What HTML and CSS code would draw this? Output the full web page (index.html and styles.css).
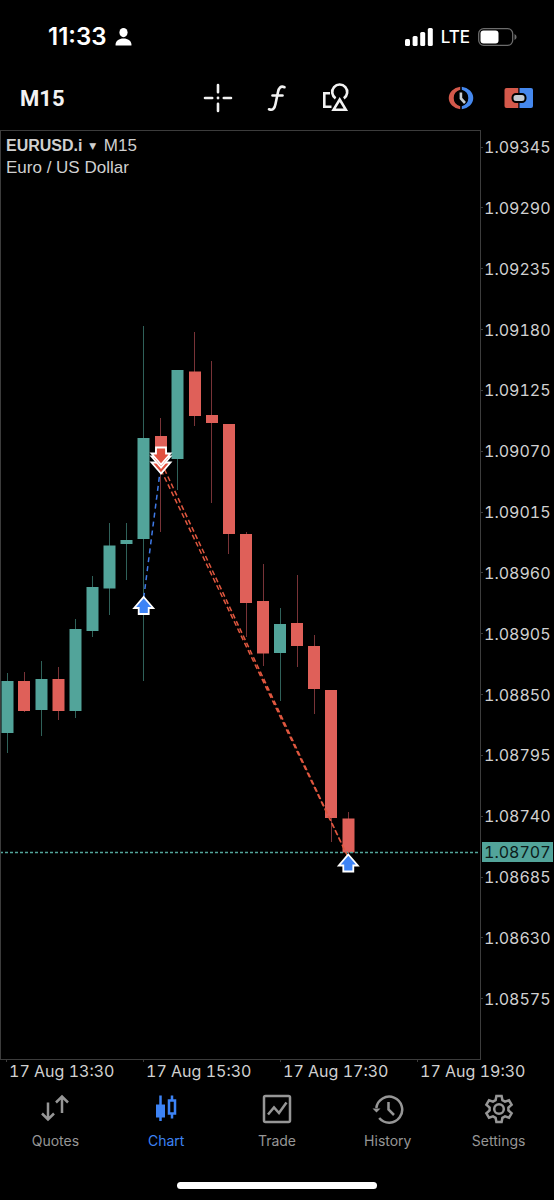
FILE: index.html
```html
<!DOCTYPE html>
<html lang="en">
<head>
    <meta charset="UTF-8">
    <meta name="viewport" content="width=device-width, initial-scale=1">
    <title>EURUSD.i M15</title>
    <link rel="stylesheet" href="styles.css">
</head>
<body>
    <header class="status-bar">
        <div class="status-group">
            <span class="clock">11:33</span>
            <svg width="17" height="18" viewBox="0 0 17 18" fill="#fff">
                <ellipse cx="8.5" cy="4.6" rx="4.1" ry="4.6"/>
                <path d="M.5 17C.5 13 4 10.6 8.500 10.600S16.500 13 16.500 17Q16.500 17.500 16 17.500H1Q.5 17.500.5 17Z"/>
            </svg>
        </div>
        <div class="status-group">
            <svg width="28" height="18" viewBox="0 0 28 18" fill="#fff">
                <rect x="0" y="11" width="5" height="7" rx="1.500"/>
                <rect x="7.600" y="8" width="5" height="10" rx="1.500"/>
                <rect x="15.200" y="4" width="5" height="14" rx="1.500"/>
                <rect x="22.800" y="0" width="5" height="18" rx="1.500"/>
            </svg>
            <span class="network">LTE</span>
            <svg width="39" height="18" viewBox="0 0 39 18">
                <rect x=".7" y=".7" width="34" height="16.600" rx="5" fill="none" stroke="#6c6c6c" stroke-width="1.300"/>
                <rect x="2.500" y="2.500" width="18" height="13" rx="3" fill="#fff"/>
                <path d="M36.500 6Q38.600 7 38.600 9T36.500 12Z" fill="#6c6c6c"/>
            </svg>
        </div>
    </header>

    <div class="toolbar">
        <button class="timeframe" type="button">M15</button>
        <div class="tools">
            <button type="button" aria-label="Crosshair">
                <svg width="30" height="30" viewBox="0 0 30 30" stroke="#f2f2f2" stroke-width="2.600" stroke-linecap="round">
                    <path d="M15 2V9.200M15 20.800V28M2 15H9.200M20.800 15H28"/>
                    <circle cx="15" cy="15" r="1.400" fill="#f2f2f2" stroke="none"/>
                </svg>
            </button>
            <button type="button" aria-label="Indicators">
                <svg width="30" height="30" viewBox="0 0 30 30" fill="none" stroke="#f2f2f2" stroke-width="2.600" stroke-linecap="round">
                    <path d="M22.500 4.200C18.500 2.500 16.800 5 16 9L13.500 21C12.600 26 10.500 27.800 7 26.300"/>
                    <path d="M10.500 12.500H20.500"/>
                </svg>
            </button>
            <button type="button" aria-label="Objects">
                <svg width="30" height="30" viewBox="0 0 30 30" fill="none" stroke="#f2f2f2" stroke-width="2.600">
                    <path d="M9 10.300H3.300V23.800H10.500"/>
                    <path d="M14.600 15.300A7.500 7.500 0 1 1 22.800 15.300"/>
                    <path d="M18.700 16.500L24.800 26.700H12.600Z"/>
                </svg>
            </button>
        </div>
        <div class="trade-tools">
            <button type="button" aria-label="Trading sessions">
                <svg width="30" height="24" viewBox="0 0 30 24">
                    <path d="M14.200 .8A13.200 11.300 0 0 0 14.200 23.200V20.200A8.800 8.500 0 0 1 14.200 3.800Z" fill="#d4594b"/>
                    <path d="M15.800 .8A13.200 11.300 0 0 1 15.800 23.200V20.200A8.800 8.500 0 0 0 15.800 3.800Z" fill="#4588ee"/>
                    <path d="M14.900 6.500V12.500L19 17" fill="none" stroke="#c6ccd2" stroke-width="2.600"/>
                </svg>
            </button>
            <button type="button" aria-label="One click trading">
                <svg width="30" height="24" viewBox="0 0 30 24">
                    <path d="M2.500 2H14.300V22H2.500Q.5 22 .5 20V4Q.5 2 2.500 2Z" fill="#d4594b"/>
                    <path d="M15.500 2H27Q29 2 29 4V20Q29 22 27 22H15.500Z" fill="#4588ee"/>
                    <rect x="8.500" y="8" width="13" height="8" rx="3.500" fill="#c3cbd3" stroke="#000" stroke-width="2"/>
                </svg>
            </button>
        </div>
    </div>

    <main>
        <div class="chart">
            <div class="plot">
                <div class="symbol">
                    <div><b>EURUSD.i</b> <span class="caret">▼</span> M15</div>
                    <div>Euro / US Dollar</div>
                </div>
                <svg class="candles" viewBox="1 131 479 928" role="img" aria-label="EURUSD candles">
                    <defs>
                        <path id="arrow" d="M0-9.500L9.500 1.500H5V7.500H-5V1.500H-9.500Z" stroke="#fff" stroke-width="1.800"/>
                    </defs>
                    <!-- wicks -->
                    <path class="wick-up" d="M7.500 673V753M41.500 661V736M75.500 619V718M92.500 576V637M109.500 523V615M126.500 523V580M143.500 326V681M177.500 370V490M280.500 608V701"/>
                    <path class="wick-down" d="M24.500 672V712M58.500 667V720M160.500 418V532M194.500 332V426M211.500 361V503M228.500 424V554M246.500 532V637M263.500 564V666M297.500 575V667M314.500 635V714M331.500 690V842M348.500 812V853"/>
                    <!-- bodies -->
                    <path class="body-up" d="M1.500 681h12v52h-12zM35.500 679h12v31h-12zM69.500 629h12v82h-12zM86.500 587h12v44h-12zM103.500 545.500h12v43h-12zM120.500 540h12v4h-12zM137.500 438h12v101h-12zM171.500 370h12v89h-12zM274 624h12v29h-12z"/>
                    <path class="body-down" d="M18 681h12v30h-12zM52.500 679h12v32h-12zM155 436h12v24h-12zM189 371.500h12v44.500h-12zM206 415h12v8h-12zM223 424h12v110h-12zM240 534h12v69h-12zM257 601h12v52.500h-12zM291 623h12v23h-12zM308 646h12v43h-12zM325 690h12v128h-12zM342.500 818.500h12v34h-12z"/>
                    <path class="price-line" d="M0 852.500H480"/>
                    <path class="deal-buy" d="M160.500 468L143.700 598"/>
                    <path class="deal-sell" d="M161 470L348 857M161 462L348 857"/>
                    <use href="#arrow" transform="translate(161 464) rotate(180)" fill="#e2503e"/>
                    <use href="#arrow" transform="translate(161 458) rotate(180)" fill="#e2503e"/>
                    <use href="#arrow" transform="translate(161 455) rotate(180)" fill="#e2503e"/>
                    <use href="#arrow" x="143.700" y="606.500" fill="#3d83f5"/>
                    <use href="#arrow" x="348.300" y="864" fill="#3d83f5"/>
                </svg>
            </div>
            <div class="price-axis">
                <span>1.09345</span>
                <span>1.09290</span>
                <span>1.09235</span>
                <span>1.09180</span>
                <span>1.09125</span>
                <span>1.09070</span>
                <span>1.09015</span>
                <span>1.08960</span>
                <span>1.08905</span>
                <span>1.08850</span>
                <span>1.08795</span>
                <span>1.08740</span>
                <span>1.08685</span>
                <span>1.08630</span>
                <span>1.08575</span>
                <div class="current-price">1.08707</div>
            </div>
        </div>
        <div class="time-axis">
            <span>17 Aug 13:30</span>
            <span>17 Aug 15:30</span>
            <span>17 Aug 17:30</span>
            <span>17 Aug 19:30</span>
        </div>
    </main>

    <nav class="tab-bar">
        <a href="#quotes">
            <svg width="32" height="32" viewBox="0 0 32 32">
                <path d="M9 8.500V25M3 19.500L9 25.500L15 19.500M23 19V3M17 8.500L23 2.500L29 8.500"/>
            </svg>
            Quotes
        </a>
        <a href="#chart" class="active">
            <svg width="32" height="32" viewBox="0 0 32 32">
                <path d="M10.500 1.500V27M22 1.500V6M22 20V24.500"/>
                <path d="M6 10.500H15V23.500H6Z" fill="currentColor" stroke="none"/>
                <path d="M19 6.500H25V19.500H19Z"/>
            </svg>
            Chart
        </a>
        <a href="#trade">
            <svg width="32" height="32" viewBox="0 0 32 32">
                <rect x="3" y="2" width="26" height="26" rx="1.500"/>
                <path d="M7 20.500L13 13.500L18 19L25.500 8.500"/>
            </svg>
            Trade
        </a>
        <a href="#history">
            <svg width="32" height="32" viewBox="0 0 32 32">
                <path d="M7.200 24A13 13 0 1 0 4.300 14"/>
                <path d="M.5 14.500H8.500L4.500 18.500Z" fill="currentColor" stroke="none"/>
                <path d="M16.500 8V15.500L22 21"/>
            </svg>
            History
        </a>
        <a href="#settings">
            <svg width="32" height="32" viewBox="0 0 32 32">
                <path d="M13.400 2H18.600L19.400 6.200L22 7.700L26 6.300L28.600 10.700L25.400 13.500V16.500L28.600 19.300L26 23.700L22 22.300L19.400 23.800L18.600 28H13.400L12.600 23.800L10 22.300L6 23.700L3.400 19.300L6.600 16.500V13.500L3.400 10.700L6 6.300L10 7.700L12.600 6.200Z"/>
                <circle cx="16" cy="15" r="4.800"/>
            </svg>
            Settings
        </a>
    </nav>
    <div class="home-indicator"></div>
</body>
</html>
```
FILE: styles.css
```css
* {
    box-sizing: border-box;
}

body {
    margin: 0;
    background: #000;
    color: #d0d0d0;
    font-family: Inter, "Liberation Sans", sans-serif;
    font-size: 16px;
    line-height: 20px;
}

button {
    display: flex;
    padding: 0;
    border: none;
    background: none;
    color: #f2f2f2;
    cursor: pointer;
}

svg {
    display: block;
}

/* Status bar */
.status-bar {
    display: flex;
    justify-content: space-between;
    align-items: center;
    height: 74px;
    padding: 0 37px 0 48px;
    color: #fff;
}

.status-group {
    display: flex;
    align-items: center;
    gap: 8px;
}

.clock {
    font-size: 24px;
    font-weight: 600;
}

.network {
    font-size: 17px;
    font-weight: 500;
}

/* Toolbar */
.toolbar {
    display: grid;
    grid-template-columns: 1fr auto 1fr;
    align-items: center;
    height: 56px;
    padding: 0 20px 8px;
}

.timeframe {
    font-family: Roboto, sans-serif;
    font-size: 22px;
    font-weight: 700;
}

.tools {
    display: flex;
    gap: 29px;
}

.trade-tools {
    display: flex;
    justify-content: flex-end;
    gap: 28px;
}

/* Chart */
.chart {
    display: grid;
    grid-template-columns: 1fr 73px;
}

.plot {
    position: relative;
    border: 1px solid #3c3c3c;
}

.candles {
    width: 100%;
    height: auto;
}

.symbol {
    position: absolute;
    top: 4px;
    left: 5px;
    font-family: "Liberation Sans", Arial, sans-serif;
    font-size: 17px;
    line-height: 21px;
}

.symbol b {
    font-size: 16px;
}

.caret {
    margin: 0 3px 0 2px;
    font-family: "DejaVu Sans", sans-serif;
    font-size: 9px;
    vertical-align: 2px;
}

.wick-up {
    stroke: #2f6159;
}

.wick-down {
    stroke: #783337;
}

.body-up {
    fill: #52a49a;
}

.body-down {
    fill: #df6059;
}

.price-line {
    stroke: #52a49a;
    stroke-width: 1.5;
    stroke-dasharray: 3 2;
}

.deal-buy {
    stroke: #3f7ae8;
    stroke-width: 1.5;
    stroke-dasharray: 5 4;
}

.deal-sell {
    fill: none;
    stroke: #e0573f;
    stroke-width: 1.5;
    stroke-dasharray: 5 3;
}

.price-axis {
    position: relative;
    display: flex;
    flex-direction: column;
    justify-content: space-between;
    padding: 7px 0 51px;
    font-variant-numeric: tabular-nums;
}

.price-axis span {
    display: flex;
    align-items: center;
    gap: 1px;
}

.price-axis span::before {
    content: "";
    width: 2px;
    height: 1px;
    background: #3c3c3c;
}

/* sits on the axis at the level of the dashed price line */
.current-price {
    position: absolute;
    top: 76.6%;
    left: 1px;
    right: 1px;
    padding-left: 2px;
    background: #52a49a;
    color: #0c1c1a;
}

.time-axis {
    display: grid;
    grid-template-columns: repeat(4, 1fr);
    padding-left: 6px;
    line-height: 18px;
    font-variant-numeric: tabular-nums;
    white-space: nowrap;
}

.time-axis span {
    padding-left: 3px;
}

.time-axis span::before {
    content: "";
    display: block;
    width: 1px;
    height: 2px;
    margin-left: -3px;
    background: #3c3c3c;
}

/* Tab bar */
.tab-bar {
    display: grid;
    grid-template-columns: repeat(5, 1fr);
    padding-top: 14px;
    font-size: 14px;
}

.tab-bar a {
    display: flex;
    flex-direction: column;
    align-items: center;
    gap: 5px;
    color: #969696;
    text-decoration: none;
}

.tab-bar a.active {
    color: #3d83f5;
}

.tab-bar svg {
    fill: none;
    stroke: currentColor;
    stroke-width: 2.5;
}

.home-indicator {
    width: 36%;
    height: 7px;
    margin: 31px auto 11px;
    border-radius: 4px;
    background: #fff;
}
```
